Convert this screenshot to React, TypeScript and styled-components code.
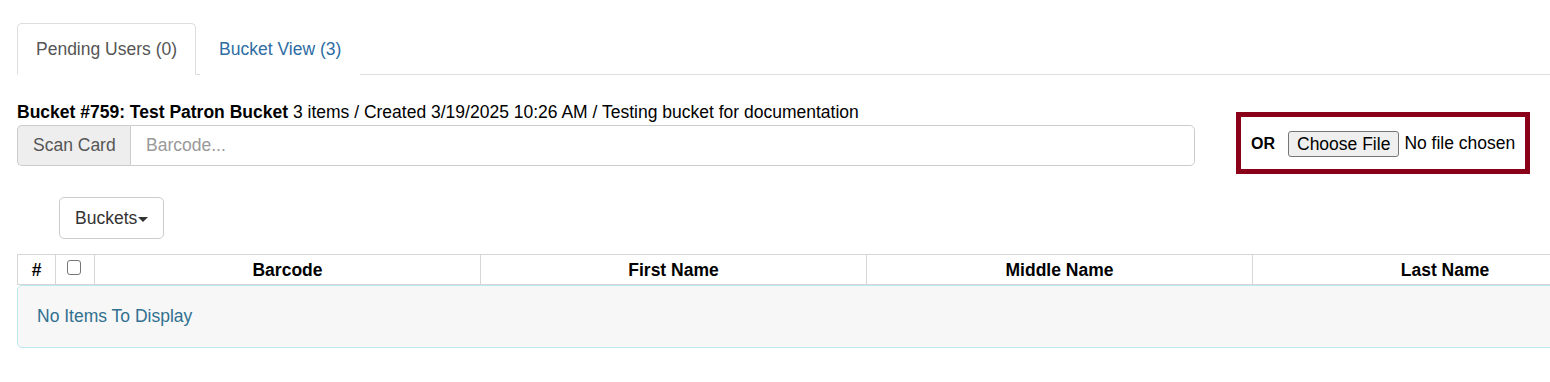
import React from "react";
import styled, { createGlobalStyle } from "styled-components";

const Global = createGlobalStyle`
  html, body {
    margin: 0;
    padding: 0;
    overflow: hidden;
    background: #fff;
  }
  body {
    font-family: "Liberation Sans", Arial, sans-serif;
    font-size: 17.5px;
    line-height: 25px;
    color: #333;
  }
  * { box-sizing: border-box; }
`;

const Page = styled.div`
  padding: 23px 0 40px 17px;
`;

const TabNav = styled.ul`
  display: flex;
  list-style: none;
  margin: 0;
  padding: 0;
  border-bottom: 1px solid #ddd;
`;

const Tab = styled.li<{ $active?: boolean }>`
  margin: 0 4px -1px 0;
  padding: 0 18px;
  line-height: 50px;
  border: 1px solid ${(p) => (p.$active ? "#ddd" : "transparent")};
  border-bottom-color: ${(p) => (p.$active ? "#fff" : "transparent")};
  border-radius: 5px 5px 0 0;
  background: #fff;
  color: ${(p) => (p.$active ? "#555" : "#2e6da4")};
  cursor: pointer;
`;

const TopRow = styled.div`
  display: flex;
  align-items: flex-start;
  margin-top: 25px;
`;

const BucketColumn = styled.div`
  width: 1178px;
  display: flex;
  flex-direction: column;
`;

const BucketTitle = styled.div`
  color: #000;
  line-height: 25px;
  white-space: nowrap;
  strong { font-weight: bold; }
`;

const InputGroup = styled.div`
  display: flex;
  height: 41px;
`;

const Addon = styled.span`
  display: flex;
  align-items: center;
  padding: 0 15px;
  width: 113px;
  background: #eee;
  color: #555;
  border: 1px solid #ccc;
  border-right: 0;
  border-radius: 5px 0 0 5px;
  white-space: nowrap;
`;

const BarcodeInput = styled.input`
  flex: 1;
  min-width: 0;
  height: 41px;
  padding: 0 15px;
  border: 1px solid #ccc;
  border-radius: 0 5px 5px 0;
  font: inherit;
  color: #555;
  outline: none;
  &::placeholder { color: #999; }
`;

const UploadBox = styled.div`
  display: flex;
  align-items: center;
  margin: 12px 0 0 41px;
  height: 62px;
  padding: 1px 10px 0;
  border: 5px solid #8b0019;
`;

const OrLabel = styled.span`
  font-weight: bold;
  font-size: 16px;
  color: #000;
  margin-right: 13px;
`;

const FileButton = styled.button`
  height: 26px;
  padding: 0 8px;
  font: inherit;
  line-height: 24px;
  color: #000;
  background: #efefef;
  border: 1px solid #767676;
  border-radius: 3px;
  margin-right: 5px;
`;

const FileStatus = styled.span`
  color: #000;
  white-space: nowrap;
`;

const Toolbar = styled.div`
  margin: 23px 0 15px 42px;
`;

const DropButton = styled.button`
  display: inline-flex;
  align-items: center;
  height: 42px;
  padding: 0 15px;
  font: inherit;
  color: #333;
  background: #fff;
  border: 1px solid #ccc;
  border-radius: 5px;
`;

const Caret = styled.span`
  display: inline-block;
  width: 0;
  height: 0;
  margin-left: 1px;
  margin-top: 2px;
  border-top: 5px solid #333;
  border-left: 5px solid transparent;
  border-right: 5px solid transparent;
`;

const Grid = styled.div`
  width: 1621px;
`;

const HeaderRow = styled.div`
  display: grid;
  grid-template-columns: 38px 39px repeat(4, 386px);
  border-top: 1px solid #d6d6d6;
  border-bottom: 1px solid #d6d6d6;
  height: 31px;
`;

const HeaderCell = styled.div`
  border-left: 1px solid #d6d6d6;
  text-align: center;
  font-weight: bold;
  color: #000;
  line-height: 27px;
  padding-top: 2px;
  &:last-child { border-right: 1px solid #d6d6d6; }
`;

const CheckCell = styled.div`
  border-left: 1px solid #d6d6d6;
  padding: 5px 0 0 11px;
`;

const CheckBox = styled.input`
  appearance: none;
  display: block;
  margin: 0;
  width: 14px;
  height: 15px;
  border: 1px solid #767676;
  border-radius: 3px;
  background: #fff;
`;

const EmptyPanel = styled.div`
  height: 63px;
  padding: 18px 19px 0;
  background: #f7f7f7;
  border: 1px solid #bce8f1;
  border-radius: 5px;
  color: #31708f;
  line-height: 25px;
`;

export default function App() {
  return (
    <>
      <Global />
      <Page>
        <TabNav>
          <Tab $active>Pending Users (0)</Tab>
          <Tab>Bucket View (3)</Tab>
        </TabNav>

        <TopRow>
          <BucketColumn>
            <BucketTitle>
              <strong>Bucket #759: Test Patron Bucket</strong> 3 items / Created 3/19/2025 10:26 AM / Testing bucket for documentation
            </BucketTitle>
            <InputGroup>
              <Addon>Scan Card</Addon>
              <BarcodeInput placeholder="Barcode..." />
            </InputGroup>
          </BucketColumn>
          <UploadBox>
            <OrLabel>OR</OrLabel>
            <FileButton type="button">Choose File</FileButton>
            <FileStatus>No file chosen</FileStatus>
          </UploadBox>
        </TopRow>

        <Toolbar>
          <DropButton type="button">
            Buckets
            <Caret />
          </DropButton>
        </Toolbar>

        <Grid>
          <HeaderRow>
            <HeaderCell>#</HeaderCell>
            <CheckCell>
              <CheckBox type="checkbox" aria-label="select all" />
            </CheckCell>
            <HeaderCell>Barcode</HeaderCell>
            <HeaderCell>First Name</HeaderCell>
            <HeaderCell>Middle Name</HeaderCell>
            <HeaderCell>Last Name</HeaderCell>
          </HeaderRow>
          <EmptyPanel>No Items To Display</EmptyPanel>
        </Grid>
      </Page>
    </>
  );
}
